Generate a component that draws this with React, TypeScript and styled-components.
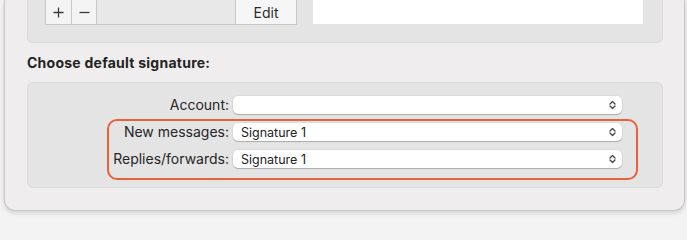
import React from "react";
import styled, { createGlobalStyle } from "styled-components";

const Global = createGlobalStyle`
  html, body { margin: 0; padding: 0; background: #f3f3f3; }
  body { font-family: Inter, "Noto Sans", "Liberation Sans", sans-serif; -webkit-font-smoothing: antialiased; }
`;

const Page = styled.div`
  width: 687px;
  height: 220px;
  overflow: hidden;
  padding-left: 4px;
  box-sizing: border-box;
`;

const Window = styled.div`
  width: 681px;
  height: 211px;
  box-sizing: border-box;
  background: #efeded;
  border: 1px solid #c8c6c6;
  border-top: none;
  border-radius: 0 0 11px 11px;
  box-shadow: 0 2px 5px rgba(0, 0, 0, 0.14);
  padding: 0 21px 0 22px;
  display: flex;
  flex-direction: column;
`;

const TopGroup = styled.div`
  height: 43px;
  box-sizing: border-box;
  background: #e5e4e4;
  border: 1px solid #dcdbdb;
  border-top: none;
  border-radius: 0 0 6px 6px;
  padding: 0 19px 0 17px;
  display: flex;
  align-items: flex-start;
  gap: 16px;
`;

const ButtonBar = styled.div`
  width: 252px;
  height: 25px;
  box-sizing: border-box;
  display: flex;
  background: #e9e8e8;
  border: 1px solid #c9c8c8;
  border-top: none;
`;

const SegButton = styled.div<{ $w: number }>`
  width: ${(p) => p.$w}px;
  height: 100%;
  box-sizing: border-box;
  background: #f4f4f4;
  border-right: 1px solid #c9c8c8;
  display: flex;
  align-items: center;
  justify-content: center;
`;

const Spacer = styled.div`
  flex: 1;
`;

const EditButton = styled.div`
  width: 61px;
  height: 100%;
  box-sizing: border-box;
  background: #f6f6f6;
  border-left: 1px solid #c9c8c8;
  display: flex;
  align-items: center;
  justify-content: center;
  font-size: 14px;
  color: #2b2b2b;
`;

const ListArea = styled.div`
  flex: 1;
  height: 24px;
  background: #ffffff;
`;

const Heading = styled.div`
  font-weight: 700;
  font-size: 14px;
  color: #232323;
  padding: 11px 0 0 0;
  height: 39px;
  box-sizing: border-box;
  letter-spacing: 0.25px;
`;

const Group = styled.div`
  position: relative;
  height: 106px;
  box-sizing: border-box;
  background: #e5e4e4;
  border: 1px solid #dcdbdb;
  border-radius: 6px;
  padding-top: 13px;
  display: grid;
  grid-template-columns: 201px 389px;
  grid-auto-rows: 18px;
  row-gap: 9px;
  column-gap: 4px;
  align-content: start;
`;

const Label = styled.div`
  text-align: right;
  font-size: 14px;
  color: #262626;
  line-height: 18px;
`;

const Popup = styled.div`
  position: relative;
  height: 18px;
  background: #ffffff;
  border-radius: 5px;
  box-shadow: 0 1px 1px rgba(0, 0, 0, 0.22), 0 0 0 0.5px rgba(0, 0, 0, 0.08);
  display: flex;
  align-items: center;
  padding: 0 6px 0 8px;
  font-size: 12.5px;
  color: #222;
`;

const PopupText = styled.span`
  flex: 1;
`;

const Highlight = styled.div`
  position: absolute;
  left: 79px;
  top: 36px;
  width: 531px;
  height: 61px;
  box-sizing: border-box;
  border: 2px solid #e8603c;
  border-radius: 10px;
  pointer-events: none;
`;

const PlusIcon = () => (
  <svg width="11" height="11" viewBox="0 0 11 11">
    <path d="M5.5 0.5 V10.5 M0.5 5.5 H10.5" stroke="#3a3a3a" strokeWidth="1.3" />
  </svg>
);

const MinusIcon = () => (
  <svg width="11" height="11" viewBox="0 0 11 11">
    <path d="M0.5 5.5 H10.5" stroke="#3a3a3a" strokeWidth="1.3" />
  </svg>
);

const Chevrons = () => (
  <svg width="7" height="10" viewBox="0 0 7 10">
    <path d="M1 4 L3.5 1.5 L6 4" fill="none" stroke="#4a4a4a" strokeWidth="1.4" strokeLinecap="round" strokeLinejoin="round" />
    <path d="M1 6 L3.5 8.5 L6 6" fill="none" stroke="#4a4a4a" strokeWidth="1.4" strokeLinecap="round" strokeLinejoin="round" />
  </svg>
);

const rows = [
  { label: "Account:", value: "" },
  { label: "New messages:", value: "Signature 1" },
  { label: "Replies/forwards:", value: "Signature 1" },
];

export default function App() {
  return (
    <Page>
      <Global />
      <Window>
        <TopGroup>
          <ButtonBar>
            <SegButton $w={26} aria-label="Add">
              <PlusIcon />
            </SegButton>
            <SegButton $w={25} aria-label="Remove">
              <MinusIcon />
            </SegButton>
            <Spacer />
            <EditButton>Edit</EditButton>
          </ButtonBar>
          <ListArea />
        </TopGroup>
        <Heading>Choose default signature:</Heading>
        <Group>
          {rows.map((r) => (
            <React.Fragment key={r.label}>
              <Label>{r.label}</Label>
              <Popup>
                <PopupText>{r.value}</PopupText>
                <Chevrons />
              </Popup>
            </React.Fragment>
          ))}
          <Highlight />
        </Group>
      </Window>
    </Page>
  );
}
